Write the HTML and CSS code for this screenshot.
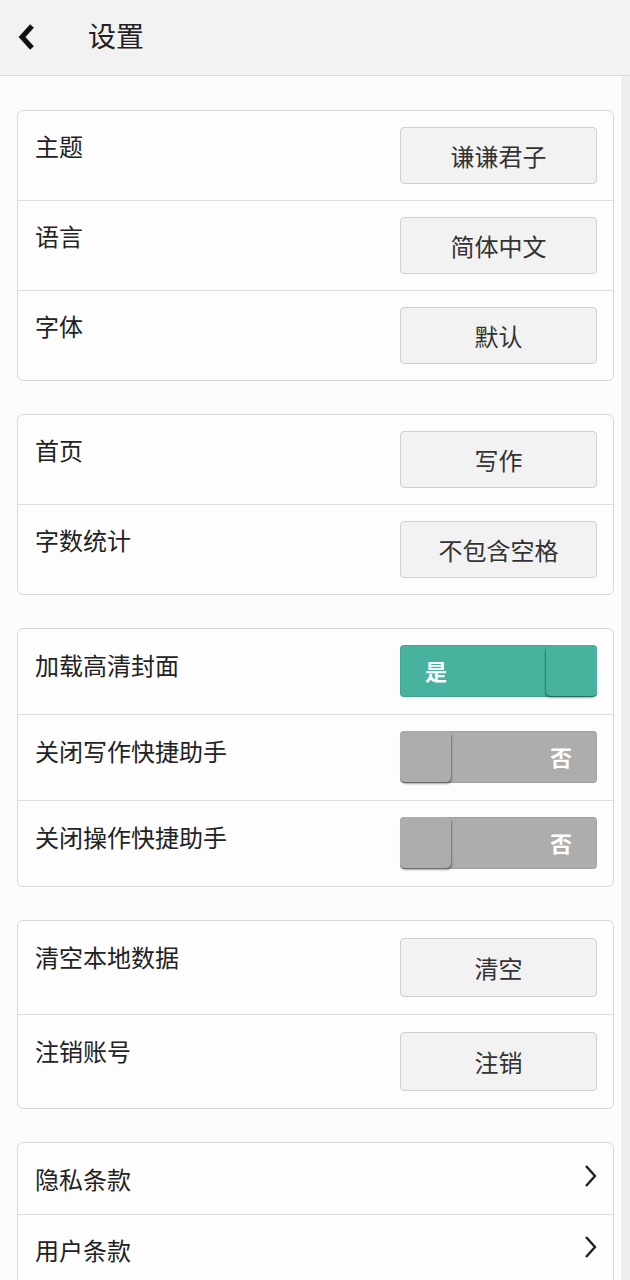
FILE: index.html
```html
<!DOCTYPE html>
<html lang="zh-CN">
<head>
    <meta charset="UTF-8">
    <meta name="viewport" content="width=device-width, initial-scale=1.0">
    <title>设置</title>
    <link rel="stylesheet" href="styles.css">
</head>
<body>
    <div class="header">
        <span class="back">
            <svg width="22" height="28" viewBox="0 0 22 28"><path d="M16 3 L6 14 L16 25" fill="none" stroke="#111" stroke-width="5" stroke-linejoin="miter"/></svg>
        </span>
        <span class="title">设置</span>
    </div>

    <div class="page">
        <div class="card">
            <div class="row">
                <span class="label">主题</span>
                <button class="btn">谦谦君子</button>
            </div>
            <div class="row">
                <span class="label">语言</span>
                <button class="btn">简体中文</button>
            </div>
            <div class="row">
                <span class="label">字体</span>
                <button class="btn">默认</button>
            </div>
        </div>

        <div class="card">
            <div class="row">
                <span class="label">首页</span>
                <button class="btn">写作</button>
            </div>
            <div class="row">
                <span class="label">字数统计</span>
                <button class="btn">不包含空格</button>
            </div>
        </div>

        <div class="card">
            <div class="row row-switch">
                <span class="label">加载高清封面</span>
                <div class="switch on"><span class="switch-text">是</span><span class="knob"></span></div>
            </div>
            <div class="row row-switch">
                <span class="label">关闭写作快捷助手</span>
                <div class="switch"><span class="knob"></span><span class="switch-text">否</span></div>
            </div>
            <div class="row row-switch">
                <span class="label">关闭操作快捷助手</span>
                <div class="switch"><span class="knob"></span><span class="switch-text">否</span></div>
            </div>
        </div>

        <div class="card">
            <div class="row row-tall">
                <span class="label">清空本地数据</span>
                <button class="btn btn-tall">清空</button>
            </div>
            <div class="row row-tall">
                <span class="label">注销账号</span>
                <button class="btn btn-tall">注销</button>
            </div>
        </div>

        <div class="card">
            <div class="row row-link">
                <span class="label">隐私条款</span>
                <svg class="arrow" width="14" height="24" viewBox="0 0 14 24"><path d="M3 2 L12 12 L3 22" fill="none" stroke="#222" stroke-width="2.4"/></svg>
            </div>
            <div class="row row-link">
                <span class="label">用户条款</span>
                <svg class="arrow" width="14" height="24" viewBox="0 0 14 24"><path d="M3 2 L12 12 L3 22" fill="none" stroke="#222" stroke-width="2.4"/></svg>
            </div>
        </div>
    </div>
</body>
</html>
```

FILE: styles.css
```css
* {
    margin: 0;
    padding: 0;
    box-sizing: border-box;
}
body {
    background: #efefef;
    font-family: 'Noto Sans CJK SC', 'Noto Sans', sans-serif;
    color: #222;
}
.header {
    height: 76px;
    background: #f2f2f2;
    border-bottom: 1px solid #d9d9d9;
    display: flex;
    align-items: center;
    padding-left: 16px;
}
.back {
    display: flex;
    width: 72px;
    margin-top: -2px;
}
.title {
    font-size: 28px;
    color: #222;
    margin-top: -6px;
}
.page {
    background: #fcfcfc;
    margin-right: 9px;
    padding: 34px 7px 40px 17px;
    display: flex;
    flex-direction: column;
    gap: 33px;
}
.card {
    background: #fdfdfd;
    border: 1px solid #d8d8d8;
    border-radius: 6px;
}
.row {
    display: flex;
    justify-content: space-between;
    align-items: flex-start;
    padding: 16px 16px 16px 17px;
    border-top: 1px solid #dedede;
}
.row:first-child {
    border-top: none;
}
.label {
    font-size: 24px;
    line-height: 24px;
    margin-top: 7px;
}
.btn {
    width: 197px;
    height: 57px;
    background: #f2f2f2;
    border: 1px solid #cfcfcf;
    border-radius: 4px;
    font-family: inherit;
    font-size: 24px;
    color: #333;
    padding-top: 0;
}
.row-switch {
    padding-top: 16px;
    padding-bottom: 17px;
}
.row-switch .label {
    margin-top: 8px;
}
.switch {
    width: 197px;
    height: 52px;
    border-radius: 4px;
    background: #adadad;
    box-shadow: inset 0 0 0 1px rgba(0, 0, 0, 0.08);
    display: flex;
    justify-content: space-between;
    align-items: center;
}
.switch.on {
    background: #47b39e;
}
.knob {
    width: 51px;
    height: 51px;
    border-radius: 5px;
    background: #adadad;
    box-shadow: 1px 2px 2px rgba(0, 0, 0, 0.35);
    align-self: flex-start;
}
.switch.on .knob {
    background: #47b39e;
    box-shadow: -1px 2px 2px rgba(0, 0, 0, 0.35);
}
.switch-text {
    color: #fff;
    font-size: 22px;
    font-weight: bold;
    padding: 0 25px;
    margin-top: -2px;
}
.row-tall {
    padding-top: 17px;
    padding-bottom: 17px;
}
.row-tall .label {
    margin-top: 7px;
}
.btn-tall {
    height: 59px;
}
.row-link {
    height: 71px;
    align-items: center;
    padding-top: 0;
    padding-bottom: 0;
}
.row-link .label {
    margin-top: 0;
}
.arrow {
    margin-top: -6px;
}
```
